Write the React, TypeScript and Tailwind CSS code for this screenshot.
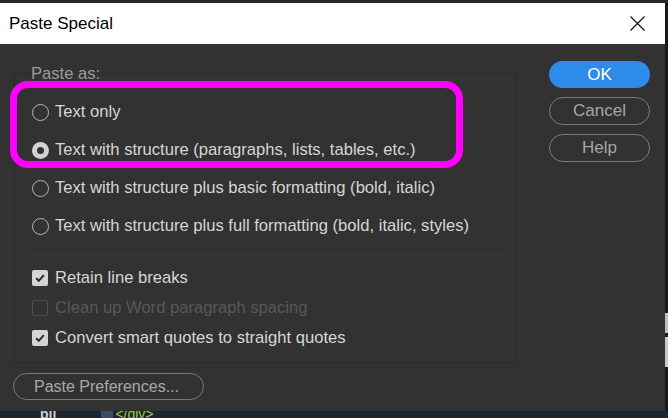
import React from "react";

const font = { fontFamily: '"Liberation Sans", Arial, sans-serif' };

const Radio: React.FC<{ checked?: boolean; label: string }> = ({
  checked,
  label,
}) => (
  <div className="flex items-center h-[38px] pl-[17px]">
    {checked ? (
      <span className="w-[17px] h-[17px] rounded-full bg-[#d2d2d2] flex items-center justify-center">
        <span className="w-[7px] h-[7px] rounded-full bg-[#323232]" />
      </span>
    ) : (
      <span className="w-[17px] h-[17px] rounded-full border border-[#b8b8b8]" />
    )}
    <span className="ml-[6px] text-[16.6px] text-[#d6d6d6]">{label}</span>
  </div>
);

const Checkbox: React.FC<{
  checked?: boolean;
  disabled?: boolean;
  label: string;
}> = ({ checked, disabled, label }) => (
  <div className="flex items-center h-[30px] pl-[17px]">
    {disabled ? (
      <span className="w-[16px] h-[16px] rounded-[2px] border border-[#4e4e4e]" />
    ) : (
      <span className="w-[16px] h-[16px] rounded-[2px] bg-[#d4d4d4] flex items-center justify-center">
        {checked && (
          <svg width="12" height="12" viewBox="0 0 12 12">
            <path
              d="M2.2 6.2 L4.8 8.8 L9.8 3.2"
              fill="none"
              stroke="#2a2a2a"
              strokeWidth="2"
            />
          </svg>
        )}
      </span>
    )}
    <span
      className={`ml-[7px] text-[16.6px] ${disabled ? "text-[#585858]" : "text-[#d6d6d6]"}`}
    >
      {label}
    </span>
  </div>
);

export default function App() {
  return (
    <div
      className="w-[668px] h-[418px] overflow-hidden bg-[#1c2632] flex flex-col"
      style={font}
    >
      <div className="h-[3px] bg-[#222a30]" />
      <div className="flex">
        <div className="w-[665px] flex flex-col">
          {/* title bar */}
          <div className="h-[41px] bg-white flex items-center justify-between pl-[9px] pr-[20px]">
            <span className="text-[17px] text-black">Paste Special</span>
            <svg width="15" height="15" viewBox="0 0 15 15">
              <path
                d="M0.5 0.5 L14.5 14.5 M14.5 0.5 L0.5 14.5"
                stroke="#111"
                strokeWidth="1.2"
              />
            </svg>
          </div>

          {/* body */}
          <div className="h-[367px] bg-[#323232] relative flex">
            <div className="flex flex-col pl-[14px] pt-[29px]">
              <div className="relative w-[503px] h-[290px] border border-[#2b2b2b] rounded-[2px] pt-[19px]">
                <span className="absolute -top-[12px] left-[15px] text-[16.6px] text-[#9c9c9c] bg-[#323232] px-[1px]">
                  Paste as:
                </span>
                <Radio label="Text only" />
                <Radio
                  checked
                  label="Text with structure (paragraphs, lists, tables, etc.)"
                />
                <Radio label="Text with structure plus basic formatting (bold, italic)" />
                <Radio label="Text with structure plus full formatting (bold, italic, styles)" />
                <div className="mt-[4px] ml-[13px] w-[475px] h-px bg-[#2a2a2a]" />
                <div className="mt-[13px]">
                  <Checkbox checked label="Retain line breaks" />
                  <Checkbox disabled label="Clean up Word paragraph spacing" />
                  <Checkbox checked label="Convert smart quotes to straight quotes" />
                </div>
              </div>
              <button className="mt-[10px] -ml-px w-[191px] h-[27px] rounded-full border border-[#7a7a7a] text-left pl-[20px] text-[16px] text-[#a9a9a9]">
                Paste Preferences...
              </button>
            </div>

            <div className="flex flex-col pl-[32px] pt-[17px] gap-[9px]">
              <button className="w-[101px] h-[27px] rounded-full bg-[#2f8be8] text-[17px] text-white">
                OK
              </button>
              <button className="w-[101px] h-[28px] rounded-full border border-[#7c7c7c] text-[17px] text-[#a6a6a6]">
                Cancel
              </button>
              <button className="w-[101px] h-[28px] rounded-full border border-[#7c7c7c] text-[17px] text-[#a6a6a6]">
                Help
              </button>
            </div>

            {/* annotation */}
            <div className="absolute left-[10px] top-[37px] w-[453px] h-[87px] border-[7px] border-[#ff00ff] rounded-[18px] pointer-events-none" />
          </div>
        </div>
        <div className="w-[3px] bg-[#1a1a1a] flex flex-col">
          <div className="h-[310px]" />
          <div className="h-[20px] bg-[#bdbdbd]" />
          <div className="h-[4px]" />
          <div className="h-[30px] bg-[#c8c8c8]" />
        </div>
      </div>
      <div className="h-[7px] bg-[#1c2632] flex items-start overflow-hidden relative">
        <span className="ml-[40px] -mt-[4px] text-[14px] leading-[14px] font-bold text-[#d0d0d0]">
          b||
        </span>
        <span className="ml-[45px] w-[12px] h-[7px] bg-[#3a4d66]" />
        <span className="ml-[2px] -mt-[4px] text-[14px] leading-[14px] text-[#9ccc3a]">
          &lt;/div&gt;
        </span>
      </div>
    </div>
  );
}
